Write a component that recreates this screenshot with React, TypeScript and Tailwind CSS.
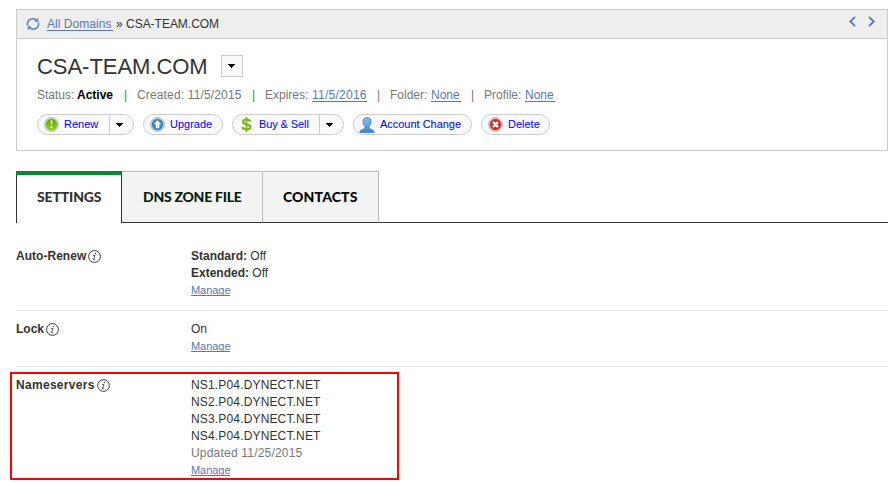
import type { ReactNode } from "react";

const Caret = () => (
  <svg width="8" height="4" viewBox="0 0 8 4" shapeRendering="crispEdges" className="block">
    <path d="M0 0H7V1H6V2H5V3H4V4H3V3H2V2H1V1H0Z" fill="#000" />
  </svg>
);

const Refresh = () => (
  <svg width="14" height="14" viewBox="0 0 14 14" fill="none" stroke="#6483bb" strokeWidth="1.6" className="block">
    <path d="M1.600 8.600C.7 5 3.200 1.700 6.800 1.700c1.900 0 3.300.8 4.200 2" />
    <path d="M12.400 5.400C13.300 9 10.800 12.300 7.200 12.300c-1.900 0-3.300-.8-4.200-2" />
    <path d="M11.700 1.200V4.200H8.800M2.300 12.800V9.800H5.200" strokeWidth="1.200" />
  </svg>
);

const RenewIcon = () => (
  <svg width="15" height="15" viewBox="0 0 15 15" className="block">
    <defs>
      <linearGradient id="green" x1="0" y1="0" x2="0" y2="1">
        <stop offset="0" stopColor="#65a80c" />
        <stop offset="1" stopColor="#8fd21a" />
      </linearGradient>
    </defs>
    <circle cx="7.5" cy="7.5" r="6.900" fill="#ececec" stroke="#aaa" strokeWidth=".9" />
    <circle cx="7.5" cy="7.5" r="5.500" fill="url(#green)" stroke="#5c9a12" strokeWidth=".5" />
    <path d="M6.600 3.600h1.800l-.4 4.400h-1z" fill="#fff" />
    <circle cx="7.500" cy="10.200" r="1" fill="#fff" />
  </svg>
);

const UpgradeIcon = () => (
  <svg width="15" height="15" viewBox="0 0 15 15" className="block">
    <circle cx="7.5" cy="7.5" r="6.900" fill="#ececec" stroke="#aaa" strokeWidth=".9" />
    <circle cx="7.5" cy="7.5" r="5.500" fill="#2d87c9" stroke="#1c6dac" strokeWidth=".5" />
    <path d="M7.500 3.200L11.300 7.300H9.300V11.200H5.700V7.300H3.700Z" fill="#fff" />
  </svg>
);

const DollarIcon = () => (
  <svg width="11" height="15" viewBox="0 0 11 15" fill="none" stroke="#80b52c" className="block">
    <path d="M9.300 4.700C8.800 3.200 7.500 2.600 5.500 2.600 3.400 2.600 2 3.500 2 4.900c0 3.300 7.400 1.500 7.400 4.900 0 1.600-1.500 2.500-3.800 2.500-2.300 0-3.700-.8-4.200-2.400" strokeWidth="2.300" />
    <path d="M5.500 0V15" strokeWidth="1.800" />
  </svg>
);

const PersonIcon = () => (
  <svg width="16" height="16" viewBox="0 0 16 16" className="block">
    <defs>
      <linearGradient id="person" x1="0" y1="0" x2="0" y2="1">
        <stop offset="0" stopColor="#8cc0f2" />
        <stop offset="1" stopColor="#3886d8" />
      </linearGradient>
    </defs>
    <path
      d="M8 .6c2.500 0 4 1.500 4 4 0 2-.7 3.600-1.900 4.900-.3 1.400.3 2.200 1.700 2.700 2 .7 3.300 1.400 3.500 3.200H.7c.2-1.800 1.500-2.500 3.500-3.200 1.400-.5 2-1.300 1.700-2.700C4.700 8.200 4 6.600 4 4.600c0-2.500 1.500-4 4-4z"
      fill="url(#person)"
      stroke="#3b7fc4"
      strokeWidth=".8"
    />
  </svg>
);

const DeleteIcon = () => (
  <svg width="15" height="15" viewBox="0 0 15 15" className="block">
    <circle cx="7.5" cy="7.500" r="6.900" fill="#ececec" stroke="#aaa" strokeWidth=".9" />
    <circle cx="7.500" cy="7.500" r="5.500" fill="#d52a2c" stroke="#b31d20" strokeWidth=".5" />
    <path d="M5 5L10 10M10 5L5 10" stroke="#fff" strokeWidth="2.400" />
  </svg>
);

const Info = () => (
  <svg width="13" height="13" viewBox="0 0 13 13" fill="none" stroke="#333" className="mt-[2px] block">
    <circle cx="6.500" cy="6.500" r="5.900" strokeWidth=".95" />
    <path d="M5.200 5.500H6.900L5.500 9.700H7" strokeWidth=".85" />
    <circle cx="7.500" cy="3.500" r=".7" fill="#333" stroke="none" />
  </svg>
);

const Chevron = ({ d }: { d: string }) => (
  <svg width="7" height="11" viewBox="0 0 7 11" fill="none" stroke="#5a78b5" strokeWidth="1.900" className="block">
    <path d={d} />
  </svg>
);

const pill = "flex h-[21px] items-center rounded-full border border-[#ccc] bg-[#f9f9f9] text-[11px] text-[#00f]";
const under = "h-[14px] border-b border-[#5a78b5] leading-[14px] text-[#5a78b5]";

const Manage = () => (
  <div className="h-[17px] pt-[2px]">
    <a className="block h-[12px] w-[39px] whitespace-nowrap border-b border-[#5a78b5] text-[11px] leading-[13px] tracking-[-0.05px] text-[#5a78b5]">
      Manage
    </a>
  </div>
);

function Row({ label, labelClass, children }: { label: string; labelClass: string; children: ReactNode }) {
  return (
    <div className="flex leading-[17px]">
      <div className="flex w-[175px]">
        <span className={`whitespace-nowrap font-bold ${labelClass}`}>{label}</span>
        <Info />
      </div>
      <div className="whitespace-nowrap">{children}</div>
    </div>
  );
}

export default function App() {
  return (
    <div className="relative h-[483px] w-[892px] overflow-hidden bg-white pl-4 pr-1 pt-[9px] font-['Liberation_Sans',Arial,sans-serif] text-[12px] text-[#333]">
      <section className="h-[142px] border border-[#ccc]">
        <header className="flex h-[29px] items-center whitespace-nowrap border-b border-[#ccc] bg-[#eee] pl-[9px] pr-[12px]">
          <Refresh />
          <a className={`ml-[7px] w-[66px] tracking-[0.05px] ${under}`}>All Domains</a>
          <span className="ml-[3px] w-[10px]">»</span>
          <span className="tracking-[-0.02px]">CSA-TEAM.COM</span>
          <div className="mb-[5px] ml-auto flex gap-[12px]">
            <Chevron d="M6 .8L1.300 5.500L6 10.200" />
            <Chevron d="M1 .8L5.700 5.500L1 10.200" />
          </div>
        </header>
        <div className="pl-5 pt-4">
          <div className="flex h-[22px]">
            <h1 className="w-[184px] whitespace-nowrap text-[22px] leading-[23px] tracking-[-0.04px]">CSA-TEAM.COM</h1>
            <button className="flex size-[22px] items-center justify-center border border-[#ccc] bg-[#f9f9f9]">
              <Caret />
            </button>
          </div>
          <div className="mt-[11px] flex h-[14px] whitespace-nowrap leading-[14px] text-[#777]">
            <span className="w-[40px]">Status:</span>
            <b className="w-[47px] text-black">Active</b>
            <span className="w-[13px] text-[#39833d]">|</span>
            <span className="w-[115px] tracking-[0.15px]">Created: 11/5/2015</span>
            <span className="w-[13px] text-[#39833d]">|</span>
            <span className="w-[47px]">Expires:</span>
            <a className={`mr-[10px] w-[55px] tracking-[0.25px] ${under}`}>11/5/2016</a>
            <span className="w-[13px]">|</span>
            <span className="w-[41px]">Folder:</span>
            <a className={`mr-[10px] w-[30px] ${under}`}>None</a>
            <span className="w-[13px] text-[#876b87]">|</span>
            <span className="w-[41px]">Profile:</span>
            <a className={`w-[30px] ${under}`}>None</a>
          </div>
          <div className="mt-[12px] flex gap-[9px] whitespace-nowrap">
            <div className={`${pill} w-[97px] pl-[6px]`}>
              <RenewIcon />
              <span className="ml-[5px] w-[45px]">Renew</span>
              <span className="flex h-full items-center border-l border-[#ccc] pl-[6px]"><Caret /></span>
            </div>
            <div className={`${pill} w-[80px] pl-[6px]`}>
              <UpgradeIcon />
              <span className="ml-[5px]">Upgrade</span>
            </div>
            <div className={`${pill} w-[112px] pl-[8px]`}>
              <DollarIcon />
              <span className="ml-[7px] w-[60px] tracking-[-0.1px]">Buy &amp; Sell</span>
              <span className="flex h-full items-center border-l border-[#ccc] pl-[6px]"><Caret /></span>
            </div>
            <div className={`${pill} w-[119px] pl-[5px]`}>
              <PersonIcon />
              <span className="ml-[5px] tracking-[-0.02px]">Account Change</span>
            </div>
            <div className={`${pill} w-[69px] pl-[6px]`}>
              <DeleteIcon />
              <span className="ml-[5px]">Delete</span>
            </div>
          </div>
        </div>
      </section>

      <nav className="mt-5 flex h-[52px] whitespace-nowrap font-['Lato',sans-serif] text-[14px] font-black leading-[44px]">
        <div className="w-[106px] border-t-4 border-[#008a32]">
          <div className="h-[48px] border-x border-[#333] pl-[20px] tracking-[-0.15px]">SETTINGS</div>
        </div>
        <div className="w-[141px] border-b border-r border-t border-b-[#333] border-r-[#bbb] border-t-[#bbb] bg-[#f3f3f3] pl-[21px] pt-[3px] tracking-[-0.26px] text-[#061c10]">DNS ZONE FILE</div>
        <div className="w-[116px] border-b border-r border-t border-b-[#333] border-r-[#bbb] border-t-[#bbb] bg-[#f3f3f3] pl-[20px] pt-[3px] tracking-[0.12px] text-black">CONTACTS</div>
        <div className="flex-1 border-b border-[#333]" />
      </nav>

      <div className="mt-[25px] h-[63px] border-b border-[#e5e5e5]">
        <Row label="Auto-Renew" labelClass="w-[72px] tracking-[0.03px]">
          <div><b>Standard:</b> Off</div>
          <div><b>Extended:</b> Off</div>
          <Manage />
        </Row>
      </div>
      <div className="h-[56px] border-b border-[#e5e5e5] pt-[10px]">
        <Row label="Lock" labelClass="w-[30px]">
          <div>On</div>
          <Manage />
        </Row>
      </div>
      <div className="pt-[10px]">
        <Row label="Nameservers" labelClass="w-[81px] tracking-[0.3px]">
          <div className="tracking-[0.16px]">NS1.P04.DYNECT.NET</div>
          <div className="tracking-[0.16px]">NS2.P04.DYNECT.NET</div>
          <div className="tracking-[0.16px]">NS3.P04.DYNECT.NET</div>
          <div className="tracking-[0.16px]">NS4.P04.DYNECT.NET</div>
          <div className="tracking-[0.2px] text-[#777]">Updated 11/25/2015</div>
          <Manage />
        </Row>
      </div>
      <div className="pointer-events-none absolute left-[10px] top-[372px] h-[108px] w-[389px] border-2 border-[#f00]" />
    </div>
  );
}
